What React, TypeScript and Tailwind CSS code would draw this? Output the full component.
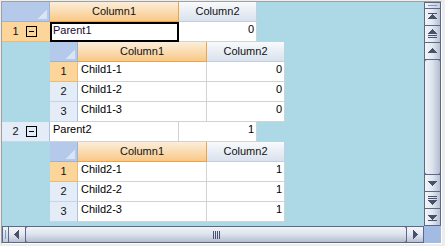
import React from "react";

const GRID = "border-[#D2D2D2]";

function Corner({ w }: { w: string }) {
  return (
    <div className={`relative h-[20px] shrink-0 ${w} bg-[#B5CAEA] border-r border-b border-[#9CB3D8]`}>
      <svg className="absolute right-[2px] bottom-[2px]" width="10" height="10" shapeRendering="crispEdges">
        <polygon points="10,0 10,10 0,10" fill="#DAE5F4" />
      </svg>
    </div>
  );
}

function HeaderCell({ w, orange, children }: { w: string; orange?: boolean; children: React.ReactNode }) {
  return (
    <div
      className={`h-[20px] shrink-0 ${w} flex items-center justify-center border-r border-b text-[11px] leading-[13px] text-[#111] ${
        orange
          ? "bg-linear-to-b from-[#FBEEDA] to-[#F8C887] border-[#F0A43F]"
          : "bg-linear-to-b from-[#F8FAFC] to-[#DAE2EE] border-[#C3CEE0]"
      }`}
    >
      {children}
    </div>
  );
}

function Minus() {
  return (
    <div className="w-[11px] h-[11px] border border-black flex items-center justify-center">
      <div className="w-[5px] h-[1px] bg-black" />
    </div>
  );
}

function ParentHeader({ num, sel }: { num: string; sel?: boolean }) {
  return (
    <div
      className={`w-[48px] h-[20px] shrink-0 flex items-center pl-[10px] border-b text-[11px] leading-[13px] text-[#111] ${
        sel ? "bg-[#FCD59B] border-[#F3B868]" : "bg-[#E4ECF7] border-[#C9D6E8] border-r border-r-[#AFC2DD]"
      }`}
    >
      <span className="w-[7px] text-center">{num}</span>
      <div className="ml-[7px]">
        <Minus />
      </div>
    </div>
  );
}

function ChildHeader({ num, sel }: { num: string; sel?: boolean }) {
  return (
    <div
      className={`w-[28px] h-[20px] shrink-0 flex items-center justify-center border-r border-b text-[11px] leading-[13px] text-[#111] ${
        sel ? "bg-[#FCD59B] border-[#F3B868]" : "bg-[#E4ECF7] border-[#C7D4E7] border-r-[#AFC2DD]"
      }`}
    >
      {num}
    </div>
  );
}

function TextCell({ children }: { children: React.ReactNode }) {
  return (
    <div className={`w-[129px] h-[20px] shrink-0 bg-white border-r border-b ${GRID} pl-[3px] pt-[1px] text-[11px] leading-[13px] text-black`}>
      {children}
    </div>
  );
}

function NumCell({ children }: { children: React.ReactNode }) {
  return (
    <div className={`w-[78px] h-[20px] shrink-0 bg-white border-r border-b ${GRID} pr-[2px] pt-[1px] text-right text-[11px] leading-[13px] text-black`}>
      {children}
    </div>
  );
}

function ChildGrid({ rows }: { rows: string[] }) {
  return (
    <div className="flex">
      <div className="w-[48px] shrink-0" />
      <div className="flex flex-col">
        <div className="flex">
          <Corner w="w-[28px]" />
          <HeaderCell w="w-[129px]" orange>
            Column1
          </HeaderCell>
          <HeaderCell w="w-[78px]">Column2</HeaderCell>
        </div>
        {rows.map((r, i) => (
          <div className="flex" key={r}>
            <ChildHeader num={String(i + 1)} sel={i === 0} />
            <TextCell>{r}</TextCell>
            <NumCell>{r.startsWith("Child1") ? "0" : "1"}</NumCell>
          </div>
        ))}
      </div>
    </div>
  );
}

const ARROW = "#47536B";

function VBtn({ kind }: { kind: "first" | "pgup" | "up" | "down" | "pgdn" | "last" }) {
  let g: React.ReactNode = null;
  if (kind === "first")
    g = (
      <>
        <rect x="3" y="4" width="9" height="1" fill={ARROW} />
        <polygon points="7.5,5 12,10 3,10" fill={ARROW} />
      </>
    );
  if (kind === "pgup")
    g = (
      <>
        <polygon points="7.5,3 12,8 3,8" fill={ARROW} />
        <rect x="3" y="9" width="9" height="1" fill={ARROW} />
        <rect x="3" y="11" width="9" height="1" fill={ARROW} />
      </>
    );
  if (kind === "up") g = <polygon points="7.5,5 12,10 3,10" fill={ARROW} />;
  if (kind === "down") g = <polygon points="3,6 12,6 7.5,11" fill={ARROW} />;
  if (kind === "pgdn")
    g = (
      <>
        <rect x="3" y="4" width="9" height="1" fill={ARROW} />
        <rect x="3" y="6" width="9" height="1" fill={ARROW} />
        <polygon points="3,8 12,8 7.5,13" fill={ARROW} />
      </>
    );
  if (kind === "last")
    g = (
      <>
        <polygon points="3,6 12,6 7.5,11" fill={ARROW} />
        <rect x="3" y="11" width="9" height="1" fill={ARROW} />
      </>
    );
  return (
    <div className="h-[16px] w-full shrink-0 bg-linear-to-r from-[#F3F5F9] via-[#E3E8F0] to-[#B7C1D3]">
      <svg width="15" height="16" shapeRendering="crispEdges">
        {g}
      </svg>
    </div>
  );
}

function VScroll() {
  return (
    <div className="w-[17px] h-[224px] bg-[#5A6987] p-[1px] flex flex-col gap-[1px]">
      <div className="h-[5px] shrink-0 bg-linear-to-r from-[#F3F5F9] to-[#C3CCDB] flex items-center justify-center">
        <div className="w-[9px] h-[1px] bg-[#7E9CCB]" />
      </div>
      <VBtn kind="first" />
      <VBtn kind="pgup" />
      <VBtn kind="up" />
      <div className="flex-1 rounded-[2px] bg-linear-to-r from-[#F1F3F8] via-[#DCE2EC] to-[#B4BED1]" />
      <VBtn kind="down" />
      <VBtn kind="pgdn" />
      <VBtn kind="last" />
    </div>
  );
}

function HScroll() {
  return (
    <div className="w-[422px] h-[17px] bg-[#5A6987] p-[1px] flex flex-row gap-[1px]">
      <div className="w-[5px] shrink-0 bg-linear-to-b from-[#F3F5F9] to-[#C3CCDB] flex items-center justify-center">
        <div className="w-[1px] h-[9px] bg-[#7E9CCB]" />
      </div>
      <div className="w-[16px] shrink-0 bg-linear-to-b from-[#F3F5F9] via-[#E3E8F0] to-[#B7C1D3]">
        <svg width="16" height="15" shapeRendering="crispEdges">
          <polygon points="10,3 10,12 5,7.5" fill={ARROW} />
        </svg>
      </div>
      <div className="flex-1 rounded-[2px] bg-linear-to-b from-[#F1F3F8] via-[#DCE2EC] to-[#B4BED1] flex items-center justify-center">
        <svg width="7" height="8" shapeRendering="crispEdges">
          <rect x="0" y="0" width="1" height="8" fill={ARROW} />
          <rect x="2" y="0" width="1" height="8" fill={ARROW} />
          <rect x="4" y="0" width="1" height="8" fill={ARROW} />
          <rect x="6" y="0" width="1" height="8" fill={ARROW} />
        </svg>
      </div>
      <div className="w-[16px] shrink-0 bg-linear-to-b from-[#F3F5F9] via-[#E3E8F0] to-[#B7C1D3]">
        <svg width="16" height="15" shapeRendering="crispEdges">
          <polygon points="6,3 6,12 11,7.5" fill={ARROW} />
        </svg>
      </div>
    </div>
  );
}

export default function App() {
  return (
    <div className="w-[445px] h-[246px] bg-[#EDEDED] pt-[1px] pl-[1px] pr-[3px] pb-[2px] font-['Liberation_Sans',Arial,sans-serif]">
      <div className="w-[441px] h-[243px] border-t border-l border-[#A0A0A0] border-r border-b border-r-[#FFFFFF] border-b-[#FFFFFF] flex">
        <div className="flex flex-col">
          <div className="w-[422px] h-[224px] bg-[#ADD8E6] flex flex-col">
            <div className="flex">
              <Corner w="w-[48px]" />
              <HeaderCell w="w-[129px]" orange>
                Column1
              </HeaderCell>
              <HeaderCell w="w-[78px]">Column2</HeaderCell>
            </div>
            <div className="flex">
              <ParentHeader num="1" sel />
              <div className="w-[129px] h-[20px] shrink-0 bg-white border-2 border-black pl-[1px] text-[11px] leading-[13px] text-[#1A0A33]">
                Parent1
              </div>
              <NumCell>0</NumCell>
            </div>
            <ChildGrid rows={["Child1-1", "Child1-2", "Child1-3"]} />
            <div className="flex">
              <ParentHeader num="2" />
              <TextCell>Parent2</TextCell>
              <NumCell>1</NumCell>
            </div>
            <ChildGrid rows={["Child2-1", "Child2-2", "Child2-3"]} />
          </div>
          <HScroll />
        </div>
        <div className="flex flex-col">
          <VScroll />
          <div className="w-[17px] h-[17px] bg-[#A3BBE3]" />
        </div>
      </div>
    </div>
  );
}
